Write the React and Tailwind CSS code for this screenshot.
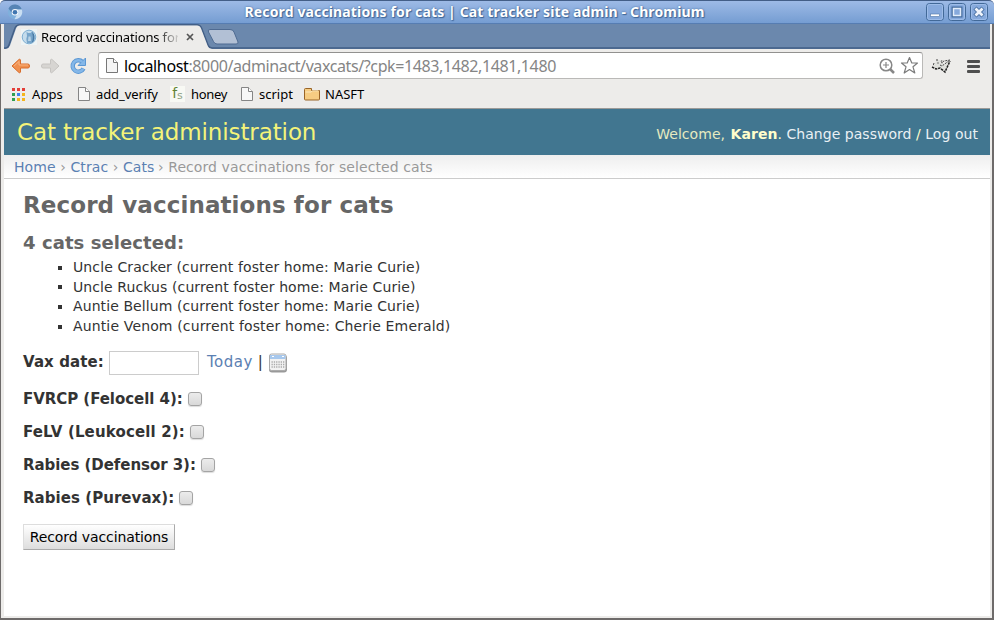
import React from "react";

const UI = "font-['Noto_Sans','Open_Sans',sans-serif]";

function PageIcon() {
  return (
    <svg width="12" height="14" viewBox="0 0 12 14" fill="none">
      <path d="M.5 .5H7.5L11.5 4.5V13.5H.5Z" fill="#f7f7f7" stroke="#858585" />
      <path d="M7.5 .5V4.5H11.5" fill="#fff" stroke="#858585" />
    </svg>
  );
}

function WinButton({ children }) {
  return (
    <svg width="18" height="18" viewBox="0 0 18 18" fill="none">
      <rect x=".5" y=".5" width="17" height="17" rx="3" fill="#86a9dc" stroke="#426998" />
      <rect x="1.5" y="1.5" width="15" height="15" rx="2" stroke="#9dbce8" />
      {children}
    </svg>
  );
}

function TitleBar() {
  return (
    <div className="flex h-6 items-center rounded-t-[5px] border-t border-b border-t-[#435e87] border-b-[#567db2] bg-gradient-to-b from-[#9dbae6] to-[#759dd2] pl-[7px] pr-[6px]">
      <svg width="16" height="16" viewBox="0 0 16 16">
        <circle cx="8" cy="8" r="7.200" fill="#7fb0dc" />
        <path d="M1.500 4.500A7.200 7.200 0 0 1 14.800 5.500H8Q5.500 5.500 4.800 9Z" fill="#5584b5" />
        <path d="M14.800 5.500A7.200 7.200 0 0 1 7.500 15.200L10.500 9.500Q11.500 7 9 5.500Z" fill="#c9def2" />
        <circle cx="8" cy="8.200" r="3.300" fill="#f2f7fc" />
        <circle cx="8" cy="8.200" r="2.300" fill="#4076b0" />
      </svg>
      <div className={`${UI} min-w-0 flex-1 whitespace-nowrap text-center text-[14px] leading-[20px] font-bold tracking-[0.135px] text-white [text-shadow:0_0_2px_#3f6596,1px_1px_1px_#3f6596]`}>
        Record vaccinations for cats | Cat tracker site admin - Chromium
      </div>
      <div className="flex gap-1">
        <WinButton><rect x="4.500" y="11" width="9" height="2.500" fill="#fff" stroke="#4d76a9" strokeWidth=".6" /></WinButton>
        <WinButton><path d="M5.500 5.500H12.500V12.500H5.500Z" stroke="#456d9f" strokeWidth="4" /><path d="M5.500 5.500H12.500V12.500H5.500Z" fill="#86a9dc" stroke="#e3edfb" strokeWidth="1.500" /></WinButton>
        <WinButton><path d="M5 5L13 13M13 5L5 13" stroke="#456d9f" strokeWidth="4.500" /><path d="M5.500 5.500L12.500 12.500M12.500 5.500L5.500 12.500" stroke="#eff4fc" strokeWidth="2.800" /></WinButton>
      </div>
    </div>
  );
}

function TabStrip() {
  return (
    <div className="relative h-[25px] bg-[#6b88ad]">
      <svg className="absolute inset-0" width="986" height="25" viewBox="0 0 986 25" fill="none">
        <path d="M0 24H2Q4 24 5 21L11 4Q12.500 .800 16 .800H193Q196 .800 197.500 4L204 21Q205 24 208 24H986" stroke="#435f86" strokeWidth="1.500" />
        <path d="M0 25H2Q5 24.500 6 21.500L12 4.500Q13 1.500 16 1.500H193Q196 1.500 197 4.500L203.500 21.500Q204.500 24.500 208 25Z" fill="#edecea" />
        <path d="M206 5.500H226Q229 5.500 230 8L234 18Q234.500 20 232 20H213Q210.500 20 209.500 17.500L204.500 8Q203.500 5.500 206 5.500Z" fill="#b2c0d5" stroke="#4f6b92" />
      </svg>
      <div className="relative flex h-full items-center pl-[17px]">
        <svg width="16" height="16" viewBox="0 0 16 16">
          <rect width="16" height="16" fill="#eef4f5" />
          <circle cx="8" cy="8" r="6.800" fill="#c4dcec" stroke="#7eaed2" />
          <path d="M5.500 2.500L7 4H9.500L11 2.500L11.300 6Q13 10.500 10.500 14H6Q4.500 10 6 7Z" fill="#78a6cb" />
          <path d="M7.500 7.500H9.500L10 12H7Z" fill="#b9d3e6" />
          <path d="M11 2.500Q15.500 7 12.500 12.500L10.500 14Q12.500 9 11.300 6Z" fill="#477aa6" />
        </svg>
        <div className={`${UI} ml-1 w-[137px] overflow-hidden whitespace-nowrap text-[13px] leading-[20px] tracking-[-0.15px] text-black [mask-image:linear-gradient(to_right,black_115px,transparent_140px)]`}>
          Record vaccinations for cats
        </div>
        <svg className="ml-2" width="8" height="8" viewBox="0 0 8 8"><path d="M1 1L7 7M7 1L1 7" stroke="#555" strokeWidth="1.700" /></svg>
      </div>
    </div>
  );
}

function Toolbar() {
  return (
    <div className="flex h-[33px] items-center bg-[#edecea] pl-[7px] pr-[8px]">
      <svg width="20" height="18" viewBox="0 0 20 18"><path d="M1 9L8.500 2L9.500 3V7H17Q18.500 7 18.500 9T17 11H9.500V15L8.500 16Z" fill="#f0904f" stroke="#d86d2c" strokeLinejoin="round" /><path d="M3 9L8 4.500V8H17" fill="none" stroke="#f8b27f" /></svg>
      <svg className="ml-[9px]" width="20" height="18" viewBox="0 0 20 18"><path d="M19 9L11.500 2L10.500 3V7H3Q1.500 7 1.500 9T3 11H10.500V15L11.500 16Z" fill="#d7d5d2" stroke="#c6c4c1" strokeLinejoin="round" /></svg>
      <svg className="ml-[9px] mr-[1px]" width="18" height="18" viewBox="0 0 18 18" fill="none">
        <path d="M13.500 5A5.700 5.700 0 1 0 14.500 11.500" stroke="#5a97d4" strokeWidth="4.400" />
        <path d="M16.500 1V8.500H9Z" fill="#84b7e8" stroke="#5a97d4" strokeLinejoin="round" />
        <path d="M13.300 4.900A5.700 5.700 0 1 0 14.200 11.800" stroke="#84b7e8" strokeWidth="2.600" />
      </svg>
      <div className="ml-[10px] flex h-[27px] w-[825px] shrink-0 items-center rounded-[3px] border border-[#bab9b7] border-t-[#92918f] bg-white pl-[7px] pr-[3px]">
        <svg width="13" height="17" viewBox="0 0 13 17"><path d="M.5 1.500H7.500L11.500 5.500V15.500H.5Z" fill="#f5f5f5" stroke="#777" /><path d="M7.500 1.500V5.500H11.500" fill="#fff" stroke="#777" /></svg>
        <div className={`${UI} ml-[5px] flex-1 whitespace-nowrap text-[16px] leading-[24px] tracking-[-0.39px] text-[#858585]`}>
          <span className="tracking-[-0.35px] text-black">localhost</span>:8000/adminact/vaxcats/?cpk=1483,1482,1481,1480
        </div>
        <svg width="16" height="16" viewBox="0 0 16 16" fill="none" stroke="#878787"><circle cx="7" cy="7" r="5.800" strokeWidth="1.500" /><path d="M4 7H10M7 4V10" strokeWidth="1.200" /><path d="M11 11L15 15" strokeWidth="2.500" /></svg>
        <svg className="ml-[5px]" width="19" height="19" viewBox="0 0 19 19"><path d="M9.500 1.500L11.800 7H17.500L13 10.800L14.800 17L9.500 13.500L4.200 17L6 10.800L1.500 7H7.200Z" fill="#fff" stroke="#7b7b7b" strokeWidth="1.200" strokeLinejoin="round" /></svg>
      </div>
      <svg className="ml-[8px]" width="22" height="18" viewBox="0 0 22 18" fill="none">
        <path d="M2 10L6 3L10 3L9 6L13 7L19 3L15 15L10 12L5 12Z" fill="#e0e1dd" />
        <path d="M1 10L5 12L9 11L14 15L19 4" stroke="#222" strokeWidth="1.500" strokeDasharray="2.500 .8" />
        <path d="M5 3H8M3 6L2 9M9 8L11 9L19 3L13 4L10 6" stroke="#444" strokeDasharray="2 1" />
        <path d="M11 3L10 5L12 6M6 6H8" stroke="#777" />
      </svg>
      <svg className="ml-[14px]" width="13" height="14" viewBox="0 0 13 14" fill="#4f4f4f"><rect y="1" width="13" height="3" rx="1" /><rect y="6" width="13" height="3" rx="1" /><rect y="11" width="13" height="3" rx="1" /></svg>
    </div>
  );
}

const APP_COLORS = ["#e33e38", "#e33e38", "#e33e38", "#2f9f50", "#3c80ed", "#f4b51c", "#2f9f50", "#f4b51c", "#f4b51c"];

function Bookmarks() {
  return (
    <div className={`${UI} flex h-[27px] items-center border-b border-[#9b9a98] bg-[#edecea] pb-[2px] pl-2 whitespace-nowrap text-[13px] leading-[20px] text-black`}>
      <svg width="13" height="13" viewBox="0 0 13 13">
        {APP_COLORS.map((c, i) => <rect key={i} x={(i % 3) * 5} y={Math.floor(i / 3) * 5} width="3" height="3" fill={c} />)}
      </svg>
      <span className="ml-[7px] w-[46px] tracking-[0.1px]">Apps</span>
      <PageIcon />
      <span className="ml-[6px] w-[74px] tracking-[-0.1px]">add_verify</span>
      <span className="flex h-4 w-[15px] justify-center bg-[#f8f9f4] font-['DejaVu_Sans',sans-serif] text-[14px] leading-[15px] text-[#638334]">f<span className="pt-[2px] text-[11px] text-[#91a487]">s</span></span>
      <span className="ml-[6px] w-[50px] tracking-[-0.3px]">honey</span>
      <PageIcon />
      <span className="ml-[6px] w-[45px]">script</span>
      <svg width="16" height="14" viewBox="0 0 16 14"><path d="M.5 12V2.500Q.5 1.500 1.500 1.500H7.500V3.500H15.500V12Q15.500 13 14.500 13H1.500Q.5 13 .5 12Z" fill="#f6cc82" stroke="#996427" /><path d="M1.500 5H7L8.500 3.800H14.500" stroke="#fbe8be" fill="none" /></svg>
      <span className="ml-[5px]">NASFT</span>
    </div>
  );
}

const CATS = [
  ["Uncle Cracker (current foster home: Marie Curie)", "tracking-[0.11px]"],
  ["Uncle Ruckus (current foster home: Marie Curie)", "tracking-[0.1px]"],
  ["Auntie Bellum (current foster home: Marie Curie)", "tracking-[0.09px]"],
  ["Auntie Venom (current foster home: Cherie Emerald)", "tracking-[0.14px]"],
];
const VACCINES = [
  ["FVRCP (Felocell 4):", "tracking-[-0.05px]"],
  ["FeLV (Leukocell 2):", "tracking-[0.15px]"],
  ["Rabies (Defensor 3):", "tracking-[-0.05px]"],
  ["Rabies (Purevax):", "tracking-[0.05px]"],
];

function Calendar() {
  return (
    <svg className="mt-[2px]" width="20" height="20" viewBox="0 0 20 20">
      <rect x="1" y="2" width="18" height="17.500" rx="3" fill="#999" />
      <rect x="1.500" y="1" width="16.500" height="16.500" rx="2" fill="#f2f2f2" stroke="#ababab" />
      <path d="M2 2H17.500V6H2Z" fill="#a7c8ed" />
      <path d="M4 3.500H6M14 3.500H16" stroke="#fff" />
      <path d="M3.500 9H16.500M3.500 11.500H16.500M3.500 14H16.500" stroke="#aaa" strokeWidth="1.300" strokeDasharray="1.300 1" />
    </svg>
  );
}

export default function App() {
  return (
    <div className="flex h-[620px] w-[994px] flex-col overflow-hidden bg-white font-['DejaVu_Sans',sans-serif]">
      <TitleBar />
      <div className="flex min-h-0 flex-1 flex-col border-r-2 border-b-2 border-l border-[#6e6b6a] bg-[#edecea] pr-[2px] pb-[2px] pl-[3px]">
        <TabStrip />
        <Toolbar />
        <Bookmarks />
        <main className="flex min-h-0 flex-1 flex-col bg-white text-[14px] text-[#333]">
          <header className="flex h-[46px] shrink-0 items-center justify-between bg-[#417690] pr-3 pl-[13px] whitespace-nowrap">
            <h1 className="text-[23px] leading-[30px] tracking-[-0.11px] text-[#f4f379]">Cat tracker administration</h1>
            <div className="pt-1 text-[14px] leading-[20px] tracking-[0.05px] text-[#ffc]">
              <span className="mr-[1px] text-[#e5eac0]">Welcome,</span> <b>Karen</b>. <a className="tracking-[0.03px] text-[#e9f0f4]">Change password</a> / <a className="text-[#e9f0f4]">Log out</a>
            </div>
          </header>
          <nav className="h-6 shrink-0 border-b border-[#ccc] bg-gradient-to-b from-[#eee] to-white pl-[10px] text-[14px] leading-[24px] tracking-[0.085px] whitespace-nowrap text-[#999]">
            <a className="text-[#5b80b2]">Home</a> › <a className="text-[#5b80b2]">Ctrac</a> › <a className="text-[#5b80b2]">Cats</a> <span className="-ml-[1px]">› Record vaccinations for selected cats</span>
          </nav>
          <section className="flex flex-col items-start pt-3 pl-[19px] whitespace-nowrap">
            <h2 className="text-[23px] leading-[28px] font-bold tracking-[0.1px] text-[#666]">Record vaccinations for cats</h2>
            <h3 className="mt-[12px] text-[18px] leading-[24px] font-bold tracking-[0.08px] text-[#666]">4 cats selected:</h3>
            <ul className="mt-[3px] leading-[19.600px]">
              {CATS.map(([cat, tracking]) => (
                <li key={cat} className="flex items-center"><i className="mr-[11px] ml-[35px] size-1 bg-[#333]" /><span className={tracking}>{cat}</span></li>
              ))}
            </ul>
            <div className="mt-[14px] flex h-6 items-center text-[15px]">
              <b className="tracking-[0.1px]">Vax date:</b>
              <input className="ml-[5px] mt-[1px] h-6 w-[90px] border border-[#ccc] bg-white" />
              <a className="ml-2 tracking-[0.5px] text-[#5b80b2]">Today</a>
              <span className="mx-[5px]">|</span>
              <Calendar />
            </div>
            <div className="mt-[8px] text-[15px]">
              {VACCINES.map(([name, tracking]) => (
                <div key={name} className="flex h-[33px] items-center">
                  <b className={tracking}>{name}</b>
                  <i className="ml-[5px] size-[14px] rounded-[3px] border border-[#a4a4a4] bg-gradient-to-b from-[#ececec] to-[#d9d9d9] shadow-[0_1px_1px_#ddd]" />
                </div>
              ))}
            </div>
            <button className="mt-[10px] h-[26px] w-[152px] border border-[#ddd] border-r-[#aaa] border-b-[#aaa] bg-gradient-to-b from-white to-[#ddd] text-[14px] tracking-[-0.11px] text-black">Record vaccinations</button>
          </section>
        </main>
      </div>
    </div>
  );
}
